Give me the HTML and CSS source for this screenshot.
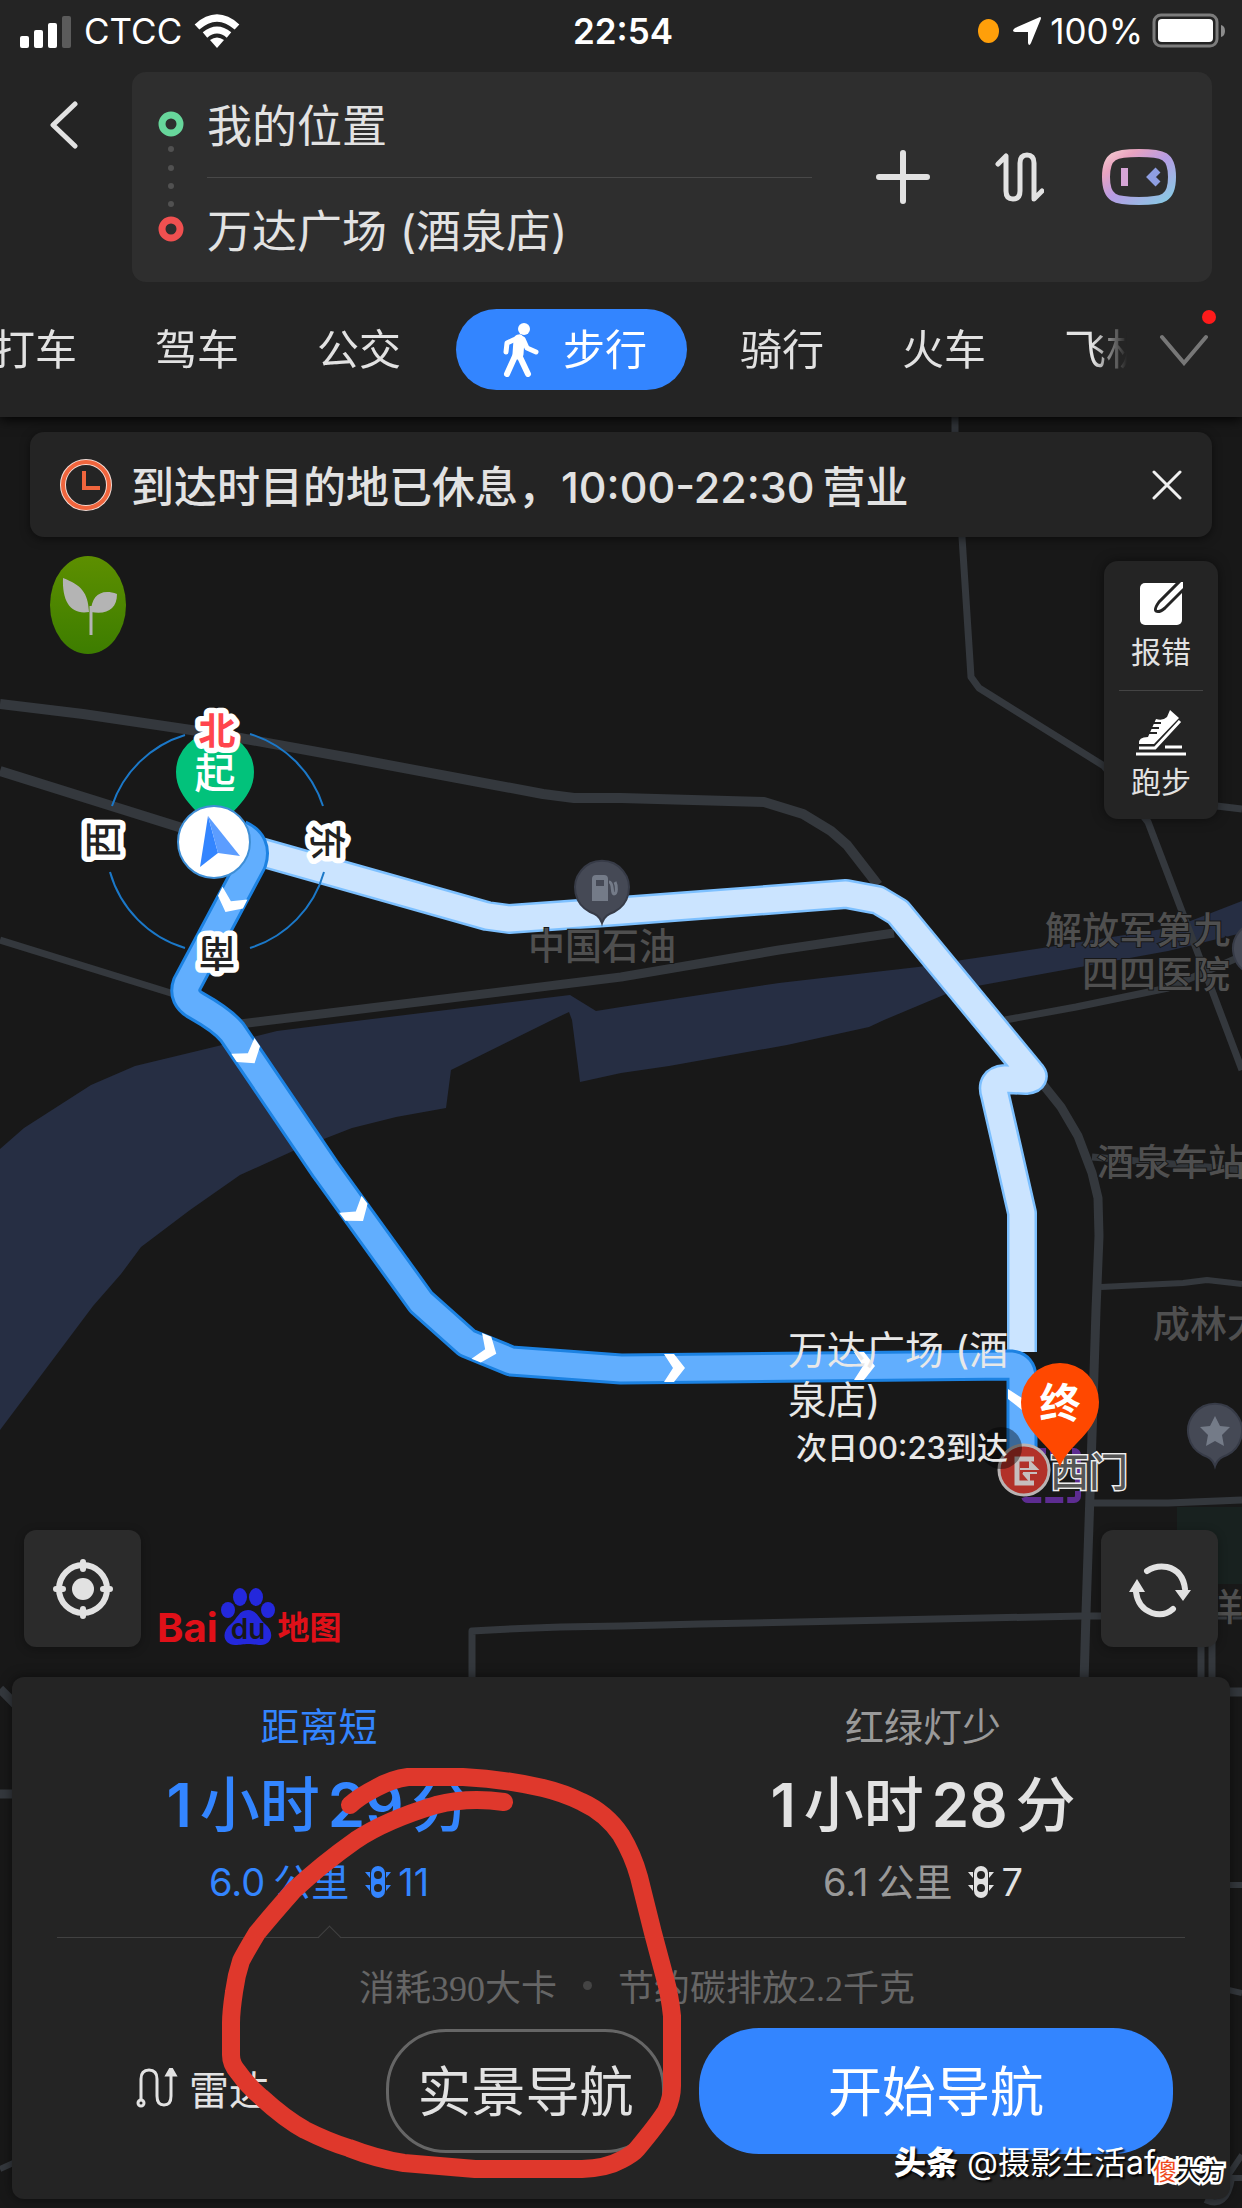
FILE: index.html
```html
<!DOCTYPE html>
<html lang="zh-CN">
<head>
	<meta charset="UTF-8">
	<meta name="viewport" content="width=device-width, initial-scale=1">
	<title>步行路线</title>
	<link rel="stylesheet" href="styles.css">
</head>
<body>
<div class="app">
	<!-- 底图 -->
	<svg class="map" viewBox="0 0 1242 2208" preserveAspectRatio="xMidYMin slice">
		<defs>
			<path id="chevron" d="M-11-14h10L10 0l-11 14h-10L-2 0z" fill="#fff"/>
			<path id="poi" d="M0 35c-2-7-7-9-12-11a27 27 0 1 1 24 0c-5 2-10 4-12 11z" fill="#454955" stroke="#373b47" stroke-width="2"/>
			<path id="marker" d="M0 65C-8 42-39 30-39 0a39 39 0 1 1 78 0c0 30-31 42-39 65z"/>
		</defs>
		<path class="river" d="M0 1149l24-21 67-43 44-19 83-20 59-15 87-11 206-25 26 16 25-4 158-24 139-16 44-7 87-13 126-20 67-26v32l-74 18-191 35-31 8-62 26-15 7-82 18-118 21-48 7-41 9-8-62-3-8-17 8-101 50-5 38-50 9-44 11-59 23-53 24-50 35-49 37-20 27-28 32-93 124z"/>
		<path class="park" d="M1177 1507h65v77h-65z"/>
		<g class="road">
			<path stroke-width="10" d="M0 704l83 10 135 20 138 25 187 35 31 4h47l143 4 39 12 28 17 16 14 31 40"/>
			<path stroke-width="10" d="M0 771l182 57"/>
			<path stroke-width="7" d="M0 940l174 54"/>
			<path stroke-width="9" d="M240 1024l381-47 158-27 115-17"/>
			<path stroke-width="7" d="M955 410v62l7 65 9 140 8 11 125 78 44 56 35 92 16 42 43 114"/>
			<path stroke-width="7" d="M1200 804l42 5M1005 1020l71-13 92-19 74-32M1092 1157l150 13"/>
			<path stroke-width="9" d="M1041 1082l20 25 17 29 14 37 6 25 1 38-3 74-4 125-6 178-2 70"/>
			<path stroke-width="6" d="M1101 1287l82-4 24-3 35 4"/>
			<path stroke-width="7" d="M1093 1503h75l74-3M472 1690v-59q60-4 149-5l79-2 382-8h160M1201 1640v50M1212 1640v50"/>
			<path stroke-width="9" d="M0 1689l20 20M0 1794h20M1220 1692h22"/>
			<path stroke-width="6" d="M1220 1885h22M0 2169l20-9M1220 1988l22 5M1225 2180l17-25M1205 2200q22 10 27-22M1225 2178h17"/>
		</g>
		<path class="route-alt edge" d="M253 850l234 66 22 3 112-8 225-17 32 6 20 12 132 160q7 7-4 8l-21-1q-15 1-10 16l27 118v139"/>
		<path class="route-alt" d="M253 850l234 66 22 3 112-8 225-17 32 6 20 12 132 160q7 7-4 8l-21-1q-15 1-10 16l27 118v139"/>
		<path class="route edge" d="M240 835q18 8 12 27l-65 122q-5 14 10 22 25 14 35 26l93 137 96 133 46 41 44 18 110 8 390-4q11 1 11 13v90"/>
		<path class="route" d="M240 835q18 8 12 27l-65 122q-5 14 10 22 25 14 35 26l93 137 96 133 46 41 44 18 110 8 390-4q11 1 11 13v90"/>
		<use href="#chevron" transform="translate(230 903) rotate(117)"/>
		<use href="#chevron" transform="translate(249 1055) rotate(56)"/>
		<use href="#chevron" transform="translate(357 1213) rotate(53)"/>
		<use href="#chevron" transform="translate(487 1350) rotate(22)"/>
		<use href="#chevron" transform="translate(675 1368)"/>
		<use href="#chevron" transform="translate(865 1366)"/>
		<use href="#chevron" transform="translate(1022 1400) rotate(90)"/>

		<g transform="translate(602 888)">
			<use href="#poi"/>
			<path d="M-10 13V-9q0-4 4-4h8q4 0 4 4v22zM-12 13H8" fill="#747b88"/>
			<path d="M7-6c5 0 2 12 5 12s3-8 1-12" fill="none" stroke="#747b88" stroke-width="3"/>
			<path d="M-6-8H2v6h-8z" fill="#454955"/>
		</g>
		<use href="#poi" transform="translate(1260 949)"/>
		<g transform="translate(1215 1431)">
			<use href="#poi"/>
			<path d="M0-15l5 10 10 1-8 8 2 11-9-5-9 5 2-11-8-8 10-1z" fill="#747b88"/>
		</g>
		<g class="poi-name">
			<text x="602" y="960" text-anchor="middle">中国石油</text>
			<text x="1230" y="944" text-anchor="end">解放军第九</text>
			<text x="1230" y="988" text-anchor="end">四四医院</text>
			<text x="1097" y="1176">酒泉车站</text>
			<text x="1153" y="1338">成林大厦</text>
			<text x="1206" y="1621">洋</text>
		</g>

		<!-- 起点和罗盘 -->
		<use href="#marker" x="215" y="772" fill="#02c27b"/>
		<text class="pin-name" x="215" y="788">起</text>
		<path class="ring" d="M112 806a111 111 0 0 1 73-71M250 734a111 111 0 0 1 73 72M324 872a111 111 0 0 1-74 76M185 948a111 111 0 0 1-75-76"/>
		<circle cx="214" cy="842" r="36" fill="#fff" stroke="#3f8fd6" stroke-width="2"/>
		<path d="M208 816l-8 51 18-14z" fill="#3385ff"/>
		<path d="M208 816l32 40-22-3z" fill="#5c9dff"/>
		<g class="compass">
			<text class="north" x="217" y="745">北</text>
			<text transform="translate(103 840) rotate(-90)" y="14">西</text>
			<text transform="translate(327 842) rotate(90)" y="14">东</text>
			<text transform="translate(217 953) rotate(180)" y="14">南</text>
		</g>

		<!-- 终点 -->
		<rect x="1024" y="1451" width="54" height="49" rx="4" fill="none" stroke="#5d2c91" stroke-width="6" stroke-dasharray="18 4"/>
		<circle cx="1024" cy="1470" r="25" fill="#b23129" stroke="#b9b3b3" stroke-width="3"/>
		<path d="M1034 1459h-17v24h17" fill="none" stroke="#c6bebe" stroke-width="5"/>
		<path d="M1020 1469h17l-7-7v7M1037 1473h-14M1023 1473l6 7v-7" fill="#c6bebe" stroke="#c6bebe" stroke-width="2"/>
		<circle cx="1001" cy="1448" r="21" fill="#000" opacity=".4"/>
		<text class="gate" x="1050" y="1486">西门</text>
		<g class="dest">
			<text x="788" y="1364">万达广场 (酒</text>
			<text x="788" y="1414">泉店)</text>
			<text class="eta" x="796" y="1459">次日00:23到达</text>
		</g>
		<use href="#marker" x="1060" y="1402" fill="#ff4800"/>
		<text class="pin-name end" x="1060" y="1418">终</text>
	</svg>

	<header class="top">
		<div class="status">
			<div class="status-side">
				<svg width="52" height="38" viewBox="0 0 52 38"><g fill="#fff"><rect y="24" width="9" height="12" rx="2"/><rect x="14" y="18" width="9" height="18" rx="2"/><rect x="28" y="11" width="9" height="25" rx="2"/><rect x="42" y="4" width="9" height="32" rx="2" opacity=".25"/></g></svg>
				<span>CTCC</span>
				<svg width="46" height="34" viewBox="0 0 46 34" fill="none" stroke="#fff" stroke-width="7"><path d="M3 13Q23-5 43 13M11 21q12-10 24 0"/><path d="M23 34l-7-8q7-5 14 0z" fill="#fff" stroke="none"/></svg>
			</div>
			<b class="clock">22:54</b>
			<div class="status-side right">
				<i class="mic-dot"></i>
				<svg width="28" height="28" viewBox="0 0 28 28"><path d="M27 0q2 0 0 4L18 26q-2 4-3 0v-11H2q-4-1 0-4z" fill="#fff"/></svg>
				<span>100%</span>
				<svg width="74" height="36" viewBox="0 0 74 36"><rect x="2" y="2" width="63" height="31" rx="7" fill="none" stroke="#7c7c7c" stroke-width="3"/><rect x="6" y="6" width="55" height="23" rx="4" fill="#fff"/><path d="M69 12q4 1 4 6t-4 6z" fill="#8c8c8c"/></svg>
			</div>
		</div>
		<div class="search">
			<button class="back" aria-label="返回"><svg width="30" height="48" viewBox="0 0 30 48"><path d="M26 3L4 24l22 21" fill="none" stroke="#e2e2e2" stroke-width="5" stroke-linecap="round" stroke-linejoin="round"/></svg></button>
			<div class="points">
				<svg width="26" height="134" viewBox="0 0 26 134"><g fill="none" stroke-width="7"><circle cx="13" cy="14" r="9" stroke="#67d69b"/><circle cx="13" cy="119" r="9" stroke="#f05050"/></g><g fill="#515151"><circle cx="13" cy="39" r="3"/><circle cx="13" cy="58" r="3"/><circle cx="13" cy="76" r="3"/><circle cx="13" cy="94" r="3"/></g></svg>
				<div class="fields">
					<input type="text" aria-label="起点" value="我的位置">
					<input type="text" aria-label="终点" value="万达广场 (酒泉店)">
				</div>
				<button aria-label="添加途经点"><svg width="54" height="54" viewBox="0 0 54 54"><path d="M27 3v48M3 27h48" stroke="#e2e2e2" stroke-width="6" stroke-linecap="round"/></svg></button>
				<button aria-label="交换"><svg width="56" height="50" viewBox="-7 0 56 50"><path d="M3 12l8-8v35q0 8 7 8t7-8V11q0-8 7-8t7 8v36l8-8" fill="none" stroke="#e2e2e2" stroke-width="5" stroke-linecap="round" stroke-linejoin="round"/></svg></button>
				<button aria-label="小度"><svg width="74" height="56" viewBox="0 0 74 56"><defs><linearGradient id="du" x2="1" y2="1"><stop stop-color="#f3c9cf"/><stop offset=".2" stop-color="#e9a3c0"/><stop offset=".5" stop-color="#b79ce4"/><stop offset="1" stop-color="#86cce4"/></linearGradient></defs><path d="M37 4c24 0 33 2 33 24s-9 24-33 24S4 50 4 28 13 4 37 4z" fill="none" stroke="url(#du)" stroke-width="8"/><path d="M19 19h7v18h-7z" fill="#d6a5d6"/><path d="M56 21l-7 7 7 7" fill="none" stroke="#8f9fe2" stroke-width="7"/></svg></button>
			</div>
		</div>
		<nav class="modes">
			<div class="mode-list">
				<a href="#">打车</a>
				<a href="#">驾车</a>
				<a href="#">公交</a>
				<a href="#" class="active"><svg width="36" height="54" viewBox="0 0 36 54"><circle cx="21" cy="6" r="6" fill="#fff"/><g fill="none" stroke="#fff" stroke-linecap="round" stroke-linejoin="round"><path d="M16 17l-1 14" stroke-width="11"/><path d="M17 14L4 20 3 29M20 16l4 9 9 4" stroke-width="5"/><path d="M13 31L4 51M16 32l9 19" stroke-width="6"/></g></svg>步行</a>
				<a href="#">骑行</a>
				<a href="#">火车</a>
				<a href="#">飞机</a>
			</div>
			<button class="more" aria-label="更多"><svg width="50" height="32" viewBox="0 0 50 32"><path d="M3 3l22 26L47 3" fill="none" stroke="#777" stroke-width="4" stroke-linecap="round"/></svg></button>
		</nav>
	</header>

	<main class="stage">
		<div class="notice">
			<svg width="52" height="52" viewBox="0 0 52 52" fill="none"><circle cx="26" cy="26" r="23" stroke="#f3dcd5" stroke-width="6"/><circle cx="26" cy="26" r="23" stroke="#f0653d" stroke-width="4"/><path d="M24 12v17h16" stroke="#f0653d" stroke-width="4"/></svg>
			<p>到达时目的地已休息，10:00-22:30<span>营业</span></p>
			<button aria-label="关闭"><svg width="30" height="30" viewBox="0 0 30 30"><path d="M2 2l26 26M28 2L2 28" stroke="#f0f0f0" stroke-width="3" stroke-linecap="round"/></svg></button>
		</div>
		<div class="tools">
			<button class="leaf" aria-label="绿色出行"><svg width="76" height="98" viewBox="0 0 76 98"><defs><linearGradient id="green" x2="0" y2="1"><stop stop-color="#5d8f00"/><stop offset="1" stop-color="#3d7d00"/></linearGradient></defs><ellipse cx="38" cy="49" rx="38" ry="49" fill="url(#green)"/><path d="M13 22c18 7 25 14 26 34-18 3-27-10-26-34zM41 56c0-16 10-24 26-18 0 15-10 21-26 18z" fill="#b4b4b4"/><path d="M41 50v29" stroke="#b4b4b4" stroke-width="3"/></svg></button>
			<div class="side">
				<button>
					<svg width="44" height="44" viewBox="0 0 44 44"><rect x="1" y="1" width="42" height="42" rx="5" fill="#fff"/><path d="M42-2L20 20q-5 7-3 9 3 2 9-3L48 4" fill="#fff" stroke="#242424" stroke-width="3"/></svg>
					报错
				</button>
				<button>
					<svg width="50" height="46" viewBox="0 0 50 46"><path d="M34 0l9 8-25 26H3q-1-7 9-7L20 9q7 2 11-2z" fill="#fff"/><path d="M3 38h16L44 11" fill="none" stroke="#fff" stroke-width="3"/><path d="M17 13h8M15 18h8M13 23h8" stroke="#242424" stroke-width="2"/><path d="M0 44h50M29 37h17" stroke="#fff" stroke-width="3"/></svg>
					跑步
				</button>
			</div>
		</div>
		<div class="controls">
			<button class="square" aria-label="定位"><svg width="60" height="60" viewBox="0 0 60 60"><g fill="none" stroke="#e2e2e2" stroke-width="6"><circle cx="30" cy="30" r="24"/><path d="M30 3v7M30 50v7M3 30h7M50 30h7" stroke-linecap="round"/></g><circle cx="30" cy="30" r="11" fill="#e2e2e2"/></svg></button>
			<div class="logo">
				<span>Bai</span>
				<svg width="54" height="58" viewBox="0 0 54 58"><g fill="#2428dc"><ellipse cx="7" cy="22" rx="7" ry="8"/><ellipse cx="19" cy="9" rx="7" ry="9"/><ellipse cx="35" cy="9" rx="7" ry="9"/><ellipse cx="47" cy="22" rx="7" ry="8"/><path d="M27 22c9 0 11 9 17 14 11 9 6 21-4 21-6 0-8-1-13-1s-7 1-13 1C3 57-1 45 10 36c6-5 8-14 17-14z"/></g><text x="27" y="51" text-anchor="middle">du</text></svg>
				<span class="cn">地图</span>
			</div>
			<button class="square" aria-label="刷新"><svg width="62" height="60" viewBox="0 0 62 60"><path d="M18 12q9-6 20-4 16 4 18 22M44 50q-9 8-21 4Q9 49 7 33" fill="none" stroke="#e2e2e2" stroke-width="6" stroke-linecap="round"/><path d="M46 31h16l-8 11zM0 33h16L8 20z" fill="#e2e2e2"/></svg></button>
		</div>
	</main>

	<section class="panel">
		<div class="plans">
			<button class="plan on">
				<span class="tag">距离短</span>
				<b>1<i>小时</i>29<i>分</i></b>
				<span class="info">6.0<i>公里</i><svg width="26" height="32" viewBox="0 0 26 32"><rect x="6" width="14" height="32" rx="7"/><path d="M0 6h5v6zM26 6h-5v6zM0 19h5v6zM26 19h-5v6z"/><g fill="#242424"><circle cx="13" cy="9" r="4"/><circle cx="13" cy="22" r="4"/></g></svg><em>11</em></span>
			</button>
			<button class="plan">
				<span class="tag">红绿灯少</span>
				<b>1<i>小时</i>28<i>分</i></b>
				<span class="info">6.1<i>公里</i><svg width="26" height="32" viewBox="0 0 26 32"><rect x="6" width="14" height="32" rx="7"/><path d="M0 6h5v6zM26 6h-5v6zM0 19h5v6zM26 19h-5v6z"/><g fill="#242424"><circle cx="13" cy="9" r="4"/><circle cx="13" cy="22" r="4"/></g></svg><em>7</em></span>
			</button>
		</div>
		<p class="save"><span>消耗390大卡</span><i></i><span>节约碳排放2.2千克</span></p>
		<div class="actions">
			<button class="radar"><svg width="42" height="40" viewBox="0 0 42 40" fill="none" stroke="#e2e2e2" stroke-width="3"><circle cx="5" cy="35" r="3"/><path d="M5 31V11Q5 2 13 2t8 9v17q0 9 7 9t7-9V5"/><path d="M35 0l-4 7h8z" fill="#e2e2e2"/></svg>雷达</button>
			<button class="live">实景导航</button>
			<button class="start">开始导航</button>
		</div>
		<svg class="scrawl" viewBox="0 0 1218 522"><path d="M492 125q-36-5-68 3-50 15-80 35-34 24-63 51-22 25-36 42-12 20-16 28-5 15-7 31-3 20-3 31v32q0 9 7 17 10 14 23 25 24 22 44 33 24 12 44 18 28 11 55 15l71 6h107q25-1 39-9 12-6 16-11 20-24 29-38 6-13 6-25v-70q-2-20-7-38l-12-45-14-56q-6-22-18-42-15-22-39-33-18-9-39-14-40-9-80-11h-55q-16 2-32 11-16 8-26 17" fill="none" stroke="#df382c" stroke-width="18" stroke-linecap="round" stroke-linejoin="round"/></svg>
	</section>
	<div class="watermark"><b>头条</b> @摄影生活afeng</div>
	<div class="stamp"><span>傻</span>大方</div>
</div>
</body>
</html>
```

FILE: styles.css
```css
*{
	box-sizing: border-box;
	margin: 0;
	padding: 0;
}
body{
	background: #181818;
	color: #e2e2e2;
	font-family: Inter, "Noto Sans CJK SC", sans-serif;
}
svg{
	display: block;
	flex: none;
}
button{
	border: 0;
	background: none;
	color: inherit;
	font: inherit;
}
a{
	color: inherit;
	text-decoration: none;
}
i{
	font-style: normal;
}
.app{
	position: relative;
	display: flex;
	flex-direction: column;
	min-height: 100vh;
	overflow: hidden;
}

/* map */
.map{
	position: absolute;
	top: 0;
	left: 0;
	width: 100%;
	height: 100%;
}
.river{
	fill: #262e43;
}
.park{
	fill: #18211f;
}
.road path{
	fill: none;
	stroke: #34383d;
	stroke-linejoin: round;
}
.route, .route-alt{
	fill: none;
	stroke-width: 25;
	stroke-linejoin: round;
}
.route{
	stroke: #61aefe;
}
.route.edge{
	stroke: #1c82e2;
	stroke-width: 31;
}
.route-alt{
	stroke: #cbe4ff;
}
.route-alt.edge{
	stroke: #7dc0ff;
	stroke-width: 30;
}
.poi-name{
	fill: #4f4f4f;
	stroke: #181818;
	stroke-width: 2;
	paint-order: stroke;
	font-size: 37px;
	font-weight: 500;
}
.pin-name{
	fill: #fff;
	font-size: 41px;
	font-weight: 500;
	text-anchor: middle;
}
.pin-name.end{
	font-weight: 700;
}
.ring{
	fill: none;
	stroke: #1b78c8;
	stroke-width: 2;
}
.compass{
	fill: #222;
	stroke: #fff;
	stroke-width: 11;
	stroke-linejoin: round;
	paint-order: stroke;
	font-size: 37px;
	font-weight: 500;
	text-anchor: middle;
}
.compass .north{
	fill: #ff454d;
	font-weight: 700;
}
.gate{
	fill: #555;
	stroke: #eee;
	stroke-width: 3;
	paint-order: stroke;
	font-size: 39px;
	font-weight: 500;
}
.dest{
	fill: #e8e8e8;
	font-size: 39px;
}
.dest .eta{
	font-size: 31px;
	font-weight: 500;
}

/* header */
.top{
	position: relative;
	background: #242424;
	box-shadow: 0 2px 12px #000;
	padding-bottom: 27px;
}
.status{
	display: grid;
	grid-template-columns: 1fr auto 1fr;
	align-items: center;
	height: 72px;
	padding: 0 16px 10px 20px;
	color: #fff;
	font-size: 35px;
}
.status-side{
	display: flex;
	align-items: center;
	gap: 12px;
}
.right{
	justify-content: flex-end;
	gap: 9px;
}
.clock{
	font-weight: 600;
}
.mic-dot{
	width: 21px;
	height: 24px;
	margin-right: 5px;
	border-radius: 50%;
	background: #ff9f0a;
}
.search{
	display: flex;
	align-items: flex-start;
	padding-right: 30px;
}
.back{
	display: flex;
	justify-content: center;
	width: 132px;
	padding: 29px 4px 0 0;
}
.points{
	flex: 1;
	display: flex;
	align-items: center;
	height: 210px;
	padding: 0 36px 0 26px;
	border-radius: 14px;
	background: #2e2e2e;
}
.fields{
	flex: 1;
	margin: 0 64px 0 23px;
}
.fields input{
	display: block;
	width: 100%;
	height: 105px;
	padding-bottom: 3px;
	border: 0;
	outline: 0;
	background: none;
	color: inherit;
	font-family: inherit;
	font-size: 45px;
}
.fields input + input{
	border-top: 1px solid #484848;
}
.points button + button{
	margin-left: 58px;
}
.modes{
	display: flex;
	align-items: center;
	margin-top: 27px;
}
.mode-list{
	flex: 1;
	display: flex;
	min-width: 0;
	margin-left: -46px;
	overflow: hidden;
	font-size: 42px;
	line-height: 81px;
	white-space: nowrap;
	-webkit-mask-image: linear-gradient(to left, transparent, #000 34px);
	mask-image: linear-gradient(to left, transparent, #000 34px);
}
.mode-list a{
	flex: none;
	padding: 0 39px;
}
.mode-list .active{
	display: flex;
	align-items: center;
	gap: 24px;
	margin: 0 14px 0 16px;
	padding: 0 40px 0 47px;
	border-radius: 41px;
	background: #3385ff;
	color: #fff;
}
.more{
	position: relative;
	padding: 0 33px 0 32px;
}
.more::after{
	content: "";
	position: absolute;
	top: -24px;
	right: 26px;
	width: 14px;
	height: 14px;
	border-radius: 50%;
	background: #ff1b1b;
}

/* things over the map */
.stage{
	position: relative;
	flex: 1;
	display: flex;
	flex-direction: column;
	padding: 15px 24px 30px;
}
.notice{
	display: flex;
	align-items: center;
	height: 105px;
	margin: 0 6px;
	padding: 0 30px;
	border-radius: 14px;
	background: #242424;
	box-shadow: 0 2px 10px rgba(0,0,0,.5);
	font-size: 43px;
	font-weight: 500;
}
.notice p{
	flex: 1;
	margin-left: 19px;
	padding-bottom: 2px;
}
.notice span{
	margin-left: 8px;
}
.tools{
	display: flex;
	justify-content: space-between;
	align-items: flex-start;
	padding: 19px 0 0 26px;
}
.side{
	display: flex;
	flex-direction: column;
	width: 114px;
	margin-top: 5px;
	padding: 0 15px;
	border-radius: 14px;
	background: #242424;
	box-shadow: 0 0 12px rgba(0,0,0,.5);
}
.side button{
	display: flex;
	flex-direction: column;
	align-items: center;
	gap: 4px;
	height: 129px;
	padding-top: 21px;
	font-size: 30px;
	line-height: 44px;
}
.side button + button{
	padding-top: 19px;
	border-top: 1px solid #444;
}
.controls{
	display: flex;
	align-items: flex-end;
	margin-top: auto;
}
.square{
	display: flex;
	align-items: center;
	justify-content: center;
	width: 117px;
	height: 117px;
	border-radius: 12px;
	background: #2b2b2b;
	box-shadow: 0 2px 10px rgba(0,0,0,.3);
}
.logo{
	flex: 1;
	display: flex;
	align-items: flex-end;
	gap: 3px;
	padding: 0 0 1px 16px;
	color: #e01018;
	font-size: 40px;
	font-weight: 700;
	line-height: 36px;
}
.logo text{
	fill: #181818;
	font-size: 28px;
	font-weight: 600;
}
.logo .cn{
	font-size: 32px;
}

/* bottom card */
.panel{
	position: relative;
	margin: 0 12px 9px;
	height: 522px;
	border-radius: 12px;
	background: #242424;
	box-shadow: 0 0 12px rgba(0,0,0,.5);
}
.plans{
	position: relative;
	display: grid;
	grid-template-columns: 1fr 1fr;
	height: 261px;
	margin: 0 45px;
	border-bottom: 1px solid #414141;
}
.plans::after{
	content: "";
	position: absolute;
	left: 264px;
	bottom: -9px;
	width: 16px;
	height: 16px;
	border: 1px solid #414141;
	border-width: 1px 0 0 1px;
	background: linear-gradient(135deg, #242424 50%, transparent 50%);
	transform: rotate(45deg);
}
.plan{
	display: flex;
	flex-direction: column;
	align-items: center;
	padding: 20px 40px 0 0;
	color: #999;
}
.plan + .plan{
	padding: 20px 0 0 40px;
}
.tag{
	font-size: 39px;
	line-height: 60px;
}
.plan b{
	color: #e2e2e2;
	font-size: 60px;
	font-weight: 600;
	line-height: 96px;
}
.plan i{
	margin-left: 8px;
}
.plan b i{
	font-weight: 500;
}
.plan b i:first-child{
	margin-right: 8px;
}
.info{
	display: flex;
	align-items: center;
	font-size: 38px;
	line-height: 58px;
}
.info svg{
	margin: 0 7px 0 16px;
	fill: #e2e2e2;
}
.info em{
	color: #e2e2e2;
	font-style: normal;
}
.plan.on, .plan.on b, .plan.on em{
	color: #3385ff;
}
.plan.on svg{
	fill: #3385ff;
}
.save{
	display: flex;
	align-items: center;
	justify-content: center;
	gap: 26px;
	height: 90px;
	padding: 4px 0 0 32px;
	color: #666;
	font-family: "Liberation Serif", "Noto Sans CJK SC", serif;
	font-size: 36px;
}
.save i{
	width: 9px;
	height: 9px;
	border-radius: 50%;
	background: #444;
}
.actions{
	display: flex;
	align-items: center;
	padding: 0 57px 0 124px;
	font-size: 54px;
}
.actions button{
	padding-bottom: 6px;
}
.radar{
	display: flex;
	align-items: center;
	gap: 11px;
	margin-right: auto;
	font-size: 40px;
}
.live{
	width: 279px;
	height: 124px;
	border: 3px solid #666;
	border-radius: 60px;
}
.start{
	width: 474px;
	height: 126px;
	margin-left: 34px;
	border-radius: 60px;
	background: #3385ff;
	color: #fff;
}
.scrawl{
	position: absolute;
	top: 0;
	left: 0;
	width: 100%;
	height: 100%;
	pointer-events: none;
}
.watermark{
	position: absolute;
	right: 30px;
	bottom: 21px;
	color: #fff;
	font-size: 32px;
	line-height: 48px;
	text-shadow: 2px 2px 2px #000;
}
.watermark b{
	font-weight: 900;
}
.stamp{
	position: absolute;
	right: 17px;
	bottom: 18px;
	color: #111;
	font-size: 24px;
	line-height: 36px;
	-webkit-text-stroke: 5px #fff;
	paint-order: stroke;
}
.stamp span{
	color: #f04a1c;
}
```
